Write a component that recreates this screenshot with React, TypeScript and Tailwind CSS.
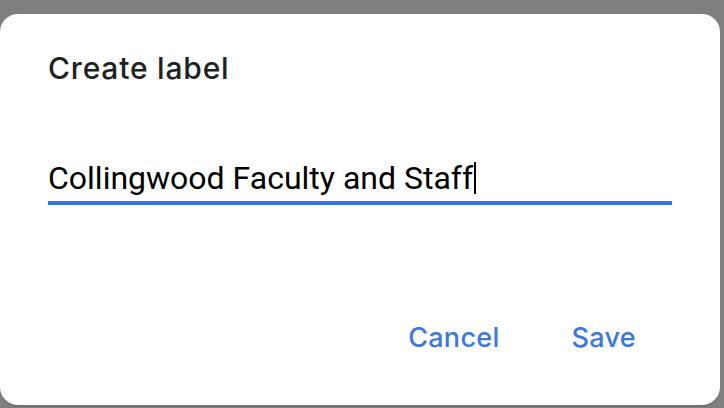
import React from "react";

export default function App() {
  return (
    <div className="w-[724px] h-[408px] bg-[#7f7f7f] pt-[14px] overflow-hidden">
      <div className="w-[720px] h-[391px] bg-white rounded-[18px] shadow-[0_2px_0_rgba(0,0,0,0.12)] flex flex-col px-[48px]">
        <div
          className="mt-[36px] text-[30px] leading-[36px] tracking-[0.8px] font-medium text-[#202124]"
          style={{ fontFamily: 'Inter, sans-serif' }}
        >
          Create label
        </div>
        <div className="mt-[73px] relative">
          <div
            className="text-[32px] leading-[38px] text-black flex items-center"
            style={{ fontFamily: 'Roboto, sans-serif' }}
          >
            <span>Collingwood Faculty and Staff</span>
            <span className="inline-block w-[2px] h-[32px] bg-black ml-[1px]" />
          </div>
          <div className="mt-[4px] h-[4px] bg-[#3574e0]" />
        </div>
        <div className="flex-1" />
        <div
          className="flex justify-end items-center mb-[50px] mr-[36px] text-[27px] leading-[34px] tracking-[0.3px] font-medium text-[#3a78e0]"
          style={{ fontFamily: 'Inter, sans-serif' }}
        >
          <span>Cancel</span>
          <span className="ml-[72px]">Save</span>
        </div>
      </div>
    </div>
  );
}
